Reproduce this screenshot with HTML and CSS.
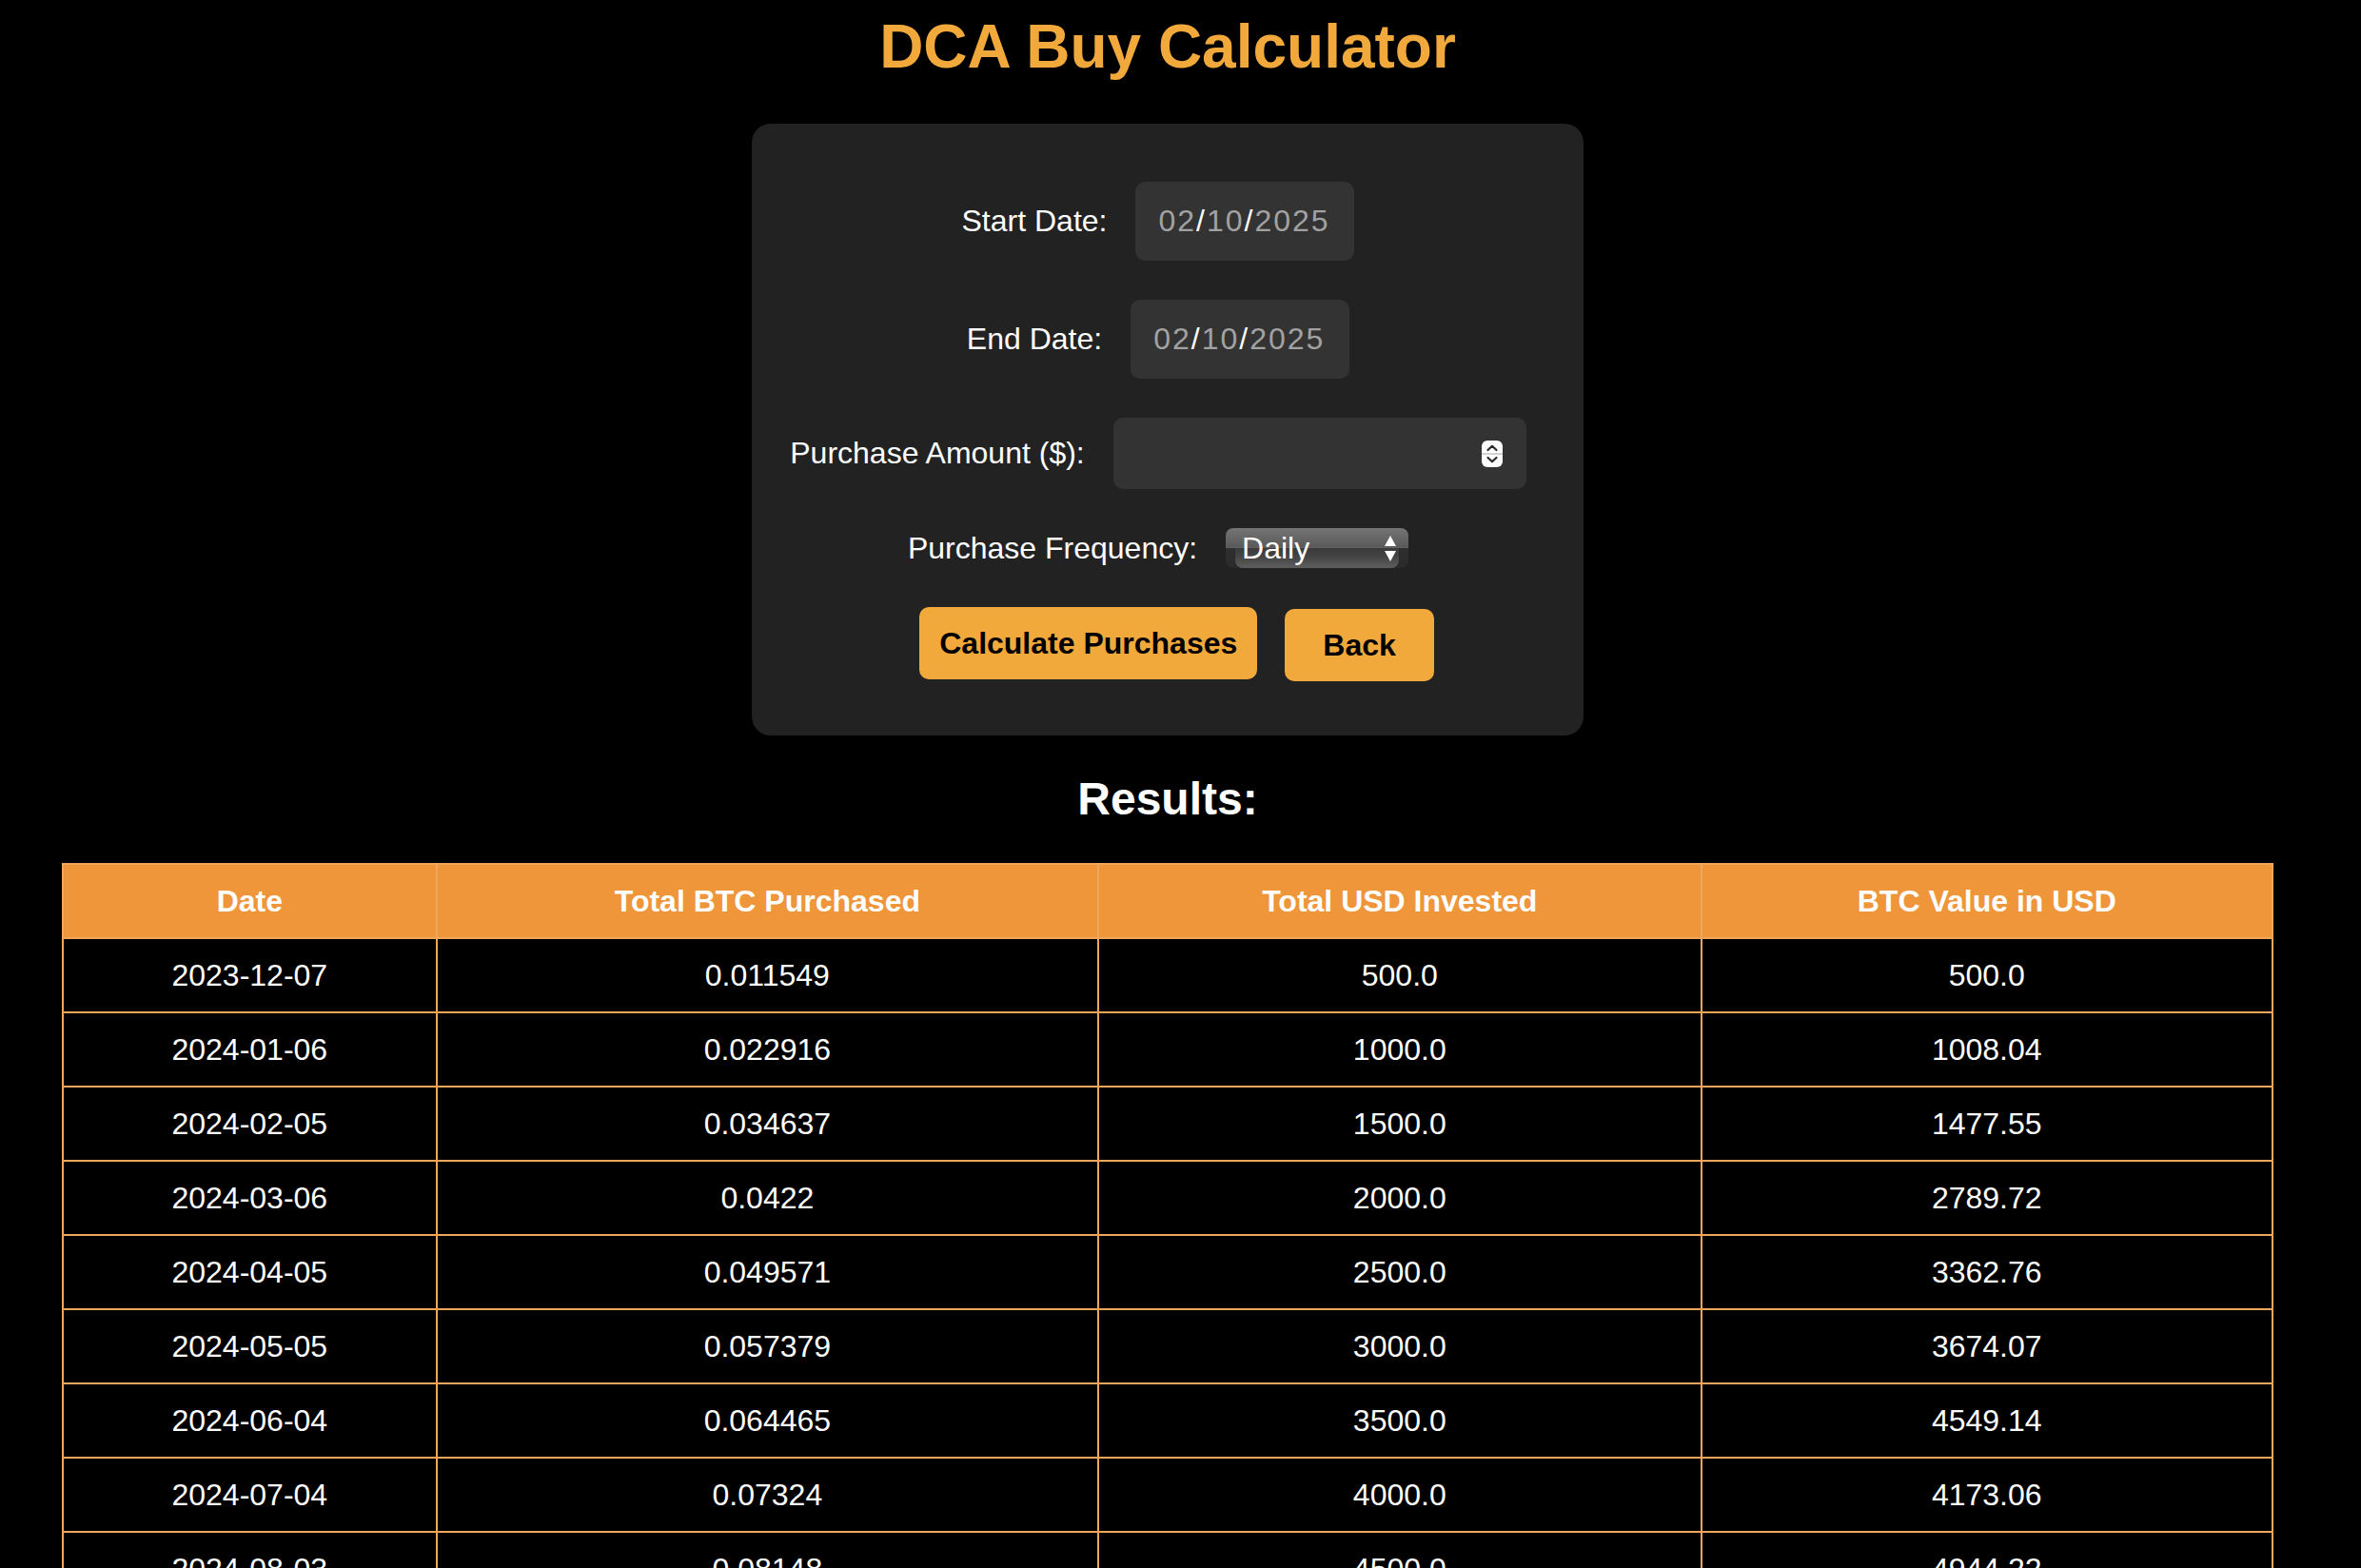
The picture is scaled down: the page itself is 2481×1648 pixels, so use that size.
FILE: index.html
```html
<!DOCTYPE html>
<html lang="en">
<head>
<meta charset="utf-8">
<title>DCA Buy Calculator</title>
<link rel="stylesheet" href="styles.css">
</head>
<body>
<main class="page">
  <h1 class="title">DCA Buy Calculator</h1>

  <form class="card">
    <div class="row">
      <label class="label">Start Date:</label>
      <div class="field field-date"><span class="dg">02</span><span class="sl">/</span><span class="dg">10</span><span class="sl">/</span><span class="dg">2025</span></div>
    </div>

    <div class="row">
      <label class="label">End Date:</label>
      <div class="field field-date"><span class="dg">02</span><span class="sl">/</span><span class="dg">10</span><span class="sl">/</span><span class="dg">2025</span></div>
    </div>

    <div class="row">
      <label class="label">Purchase Amount ($):</label>
      <div class="field field-number">
        <svg class="spinner" width="22" height="28" viewBox="0 0 22 28" aria-hidden="true">
          <rect x="0" y="0" width="22" height="28" rx="6" fill="#ffffff"/>
          <line x1="0" y1="14" x2="22" y2="14" stroke="#c4c4c4" stroke-width="1.5"/>
          <path d="M6.5 10 L11 5.8 L15.5 10" fill="none" stroke="#2a2a2a" stroke-width="2.2" stroke-linecap="round" stroke-linejoin="round"/>
          <path d="M6.5 18 L11 22.2 L15.5 18" fill="none" stroke="#2a2a2a" stroke-width="2.2" stroke-linecap="round" stroke-linejoin="round"/>
        </svg>
      </div>
    </div>

    <div class="row">
      <label class="label">Purchase Frequency:</label>
      <div class="select">
        <span class="select-text">Daily</span>
        <svg class="select-arrows" width="12" height="27" viewBox="0 0 12 27" aria-hidden="true">
          <path d="M6 0 L12 11 L0 11 Z" fill="#ffffff"/>
          <path d="M0 16 L12 16 L6 27 Z" fill="#ffffff"/>
        </svg>
      </div>
    </div>

    <div class="actions">
      <button type="button" class="btn btn-calc">Calculate Purchases</button>
      <button type="button" class="btn btn-back">Back</button>
    </div>
  </form>

  <h2 class="results-title">Results:</h2>

  <table class="results">
    <colgroup>
      <col class="c1"><col class="c2"><col class="c3"><col class="c4">
    </colgroup>
    <thead>
      <tr><th>Date</th><th>Total BTC Purchased</th><th>Total USD Invested</th><th>BTC Value in USD</th></tr>
    </thead>
    <tbody>
      <tr><td>2023-12-07</td><td>0.011549</td><td>500.0</td><td>500.0</td></tr>
      <tr><td>2024-01-06</td><td>0.022916</td><td>1000.0</td><td>1008.04</td></tr>
      <tr><td>2024-02-05</td><td>0.034637</td><td>1500.0</td><td>1477.55</td></tr>
      <tr><td>2024-03-06</td><td>0.0422</td><td>2000.0</td><td>2789.72</td></tr>
      <tr><td>2024-04-05</td><td>0.049571</td><td>2500.0</td><td>3362.76</td></tr>
      <tr><td>2024-05-05</td><td>0.057379</td><td>3000.0</td><td>3674.07</td></tr>
      <tr><td>2024-06-04</td><td>0.064465</td><td>3500.0</td><td>4549.14</td></tr>
      <tr><td>2024-07-04</td><td>0.07324</td><td>4000.0</td><td>4173.06</td></tr>
      <tr><td>2024-08-03</td><td>0.08148</td><td>4500.0</td><td>4944.22</td></tr>
    </tbody>
  </table>
</main>
</body>
</html>
```

FILE: styles.css
```css
html {
  background: #000000;
}

body {
  margin: 0;
  background: #000000;
  color: #ffffff;
  font-family: "Liberation Sans", Arial, Helvetica, sans-serif;
  font-size: 32px;
}

.page {
  width: 2454px;
  padding-bottom: 60px;
}

.title {
  margin: 13px 0 45px;
  font-size: 64px;
  line-height: 72px;
  font-weight: 700;
  text-align: center;
  color: #f1a93c;
}

/* ---------- form card ---------- */
.card {
  width: 874px;
  margin: 0 auto;
  box-sizing: border-box;
  padding: 61px 0 57px;
  background: #222222;
  border-radius: 20px;
  display: flex;
  flex-direction: column;
  gap: 41px;
}

.row {
  display: flex;
  justify-content: center;
  align-items: center;
  gap: 30px;
  padding-right: 20px;
}

.label {
  font-size: 32px;
  line-height: 37px;
  color: #ffffff;
  white-space: nowrap;
}

.field {
  box-sizing: border-box;
  background: #333333;
  border-radius: 10px;
  display: flex;
  align-items: center;
}

.field-date {
  width: 230px;
  height: 83px;
  padding-left: 24px;
  font-size: 32px;
  letter-spacing: 2px;
}

.dg {
  color: #a2a2a2;
}

.sl {
  color: #ffffff;
}

.field-number {
  width: 434px;
  height: 75px;
  justify-content: flex-end;
  padding-right: 25px;
}

.spinner {
  display: block;
}

/* ---------- select ---------- */
.select {
  position: relative;
  box-sizing: border-box;
  width: 192px;
  height: 42px;
  border-radius: 8px;
  padding: 0 13px 0 17px;
  display: flex;
  align-items: center;
  justify-content: space-between;
  background: linear-gradient(180deg, #747474 0%, #646464 30%, #5a5a5a 48%, #6c6c6c 50%, #2e2e2e 51%, #2a2a2a 100%);
  overflow: hidden;
}

.select::before {
  content: "";
  position: absolute;
  left: 10px;
  right: 10px;
  top: 51%;
  bottom: 0;
  border-radius: 0 0 8px 8px;
  background: linear-gradient(180deg, #3a3a3a 0%, #454545 45%, #5e5e5e 100%);
}

.select-text {
  position: relative;
  z-index: 1;
  font-size: 32px;
  line-height: 42px;
  color: #ffffff;
}

.select-arrows {
  position: relative;
  z-index: 1;
  display: block;
}

/* ---------- buttons ---------- */
.actions {
  display: flex;
  justify-content: center;
  align-items: flex-start;
  gap: 29px;
  padding-left: 19px;
  height: 78px;
}

.btn {
  border: none;
  border-radius: 10px;
  background: #f1a93c;
  color: #000000;
  font-family: "Liberation Sans", Arial, Helvetica, sans-serif;
  font-size: 32px;
  font-weight: 700;
  line-height: 36px;
  margin: 0;
  cursor: pointer;
}

.btn-calc {
  padding: 20px 21px;
}

.btn-back {
  padding: 20px 40px;
  margin-top: 2px;
}

/* ---------- results ---------- */
.results-title {
  margin: 39px 0 40px;
  font-size: 48px;
  line-height: 55px;
  font-weight: 700;
  text-align: center;
  color: #ffffff;
}

.results {
  width: 2324px;
  margin: 0 auto;
  border-collapse: collapse;
  table-layout: fixed;
}

.c1 { width: 16.91%; }
.c2 { width: 29.95%; }
.c3 { width: 27.28%; }
.c4 { width: 25.86%; }

.results th,
.results td {
  border: 2px solid #f2a65a;
  padding: 20px;
  font-size: 32px;
  line-height: 36px;
  text-align: center;
  color: #ffffff;
}

.results th {
  background: #ef953a;
  font-weight: 700;
}

.results td {
  background: #000000;
  font-weight: 400;
}
```
